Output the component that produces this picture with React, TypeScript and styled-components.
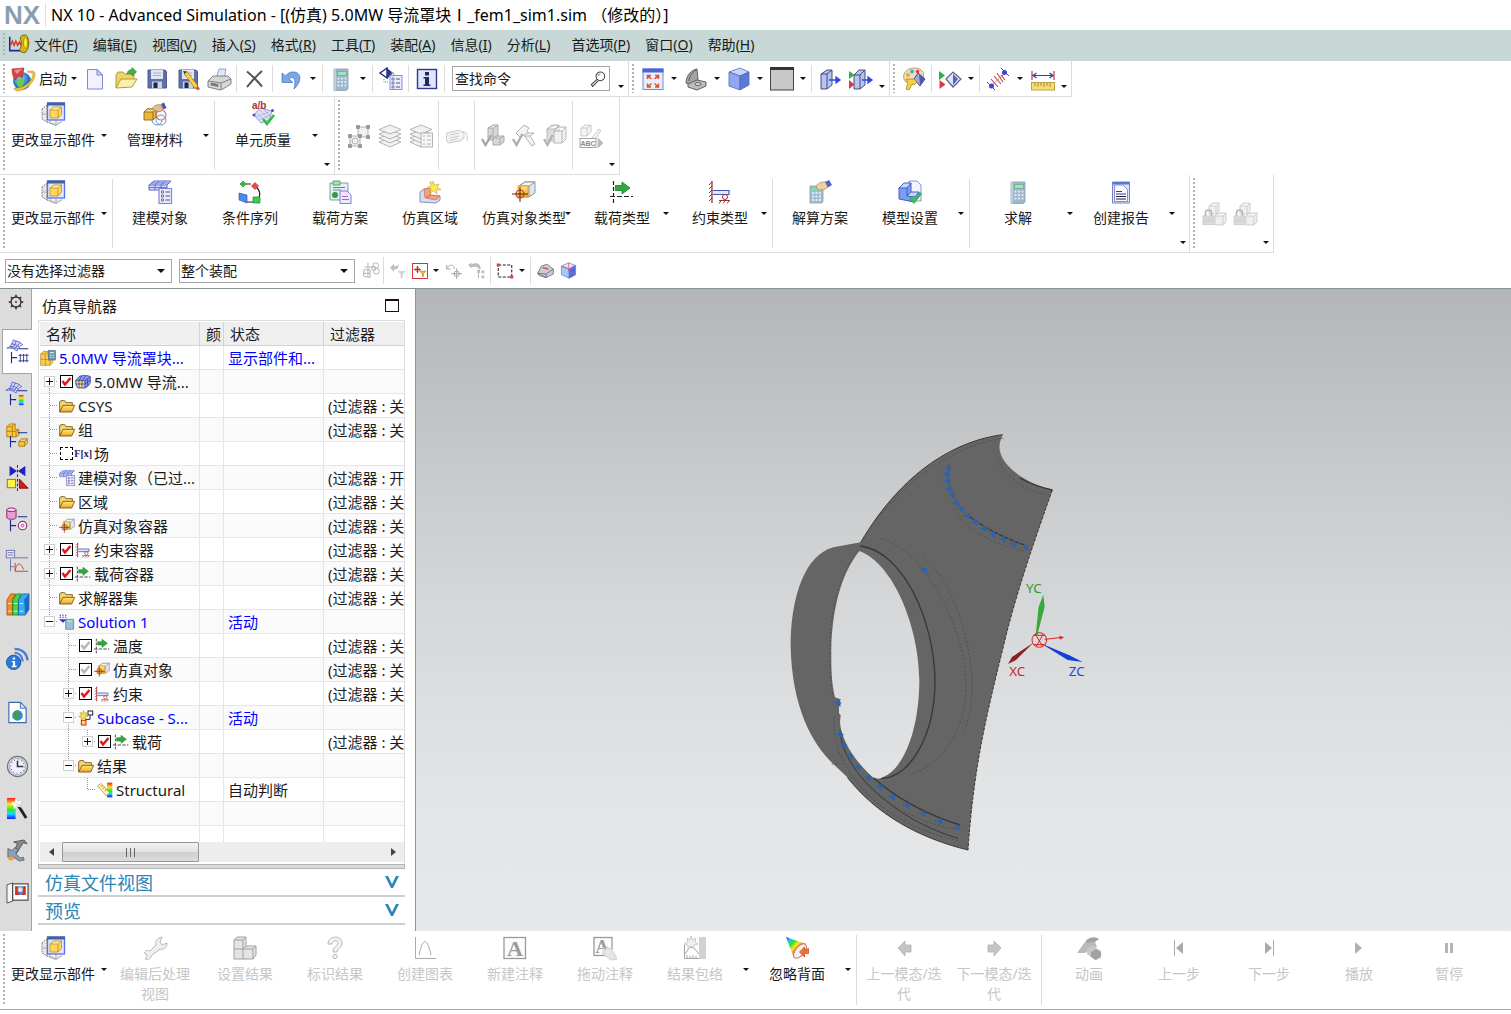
import React, { ReactNode, useState } from "react";
import styled, { createGlobalStyle, css } from "styled-components";

/* ---------- theme values ---------- */

const FONT = `"Noto Sans", "Noto Sans CJK SC", sans-serif`;
const LINE = "#dcdcdc";
const BLUE = "#0000ff";

const GlobalStyle = createGlobalStyle`
  *, *::before, *::after { box-sizing: border-box; }
  body { margin: 0; background: #fff; }
  button, input, select { font: inherit; color: inherit; margin: 0; }
  button { background: none; border: 0; padding: 0; cursor: pointer; }
  button:disabled { cursor: default; }
`;

/* ---------- icon drawings, all on a 24 x 24 grid ---------- */

const Folder = (
  <g stroke="#7a5200" strokeLinejoin="round" strokeWidth="1.300">
    <path d="M1 21V6l1.500-2h6l2 3h9.500v4" fill="#f6d878" />
    <path d="M1 21 6 11h17.500L19 21z" fill="url(#gold)" />
  </g>
);

const PartWindow = (
  <g>
    <path d="M1 7 6 3v17l-5-3zM6 20l9 3.500 6-4" fill="#e6e9ec" stroke="#777" strokeDasharray="1.500 1" />
    <path d="M1 12h8v9M9 21l6 2V17" fill="none" stroke="#aaa" />
    <rect x="6.500" y="1" width="17" height="17" fill="#dfe6fa" stroke="#5a6ef0" strokeWidth="1.300" />
    <rect x="6" y="0.500" width="18" height="3" fill="#43609a" />
    <path d="m9 8 4-3h7.500v7l-3.500 4H9z" fill="#ffd75a" />
    <path d="m9 8 4-3h7.500L17 8.500z" fill="#fff0a8" />
    <path d="m9 8 4-3h7.500v7L17 16H9zM9 8h8l3.500-3M17 8v8" fill="none" stroke="#c08a20" strokeWidth=".8" />
  </g>
);

const BoxTarget = (
  <g>
    <path d="m7 6 6-4h10v11l-6 4H7z" fill="#dfe5ec" stroke="#8d96a2" />
    <path d="m7 6 6-4h10l-6 4z" fill="#f4f6f9" stroke="#8d96a2" />
    <path d="M17 6v11" stroke="#8d96a2" />
    <path d="M6 6h10v11H6z" fill="url(#gold)" stroke="#e8982a" />
    <circle cx="8" cy="14" r="4" fill="none" stroke="#d03a20" strokeWidth="1.200" />
    <path d="M8 7v15M0 14h16" stroke="#4a2a1a" strokeWidth="1" />
  </g>
);

const LoadArrow = (
  <g>
    <path d="M3.500 1v22" stroke="#222" strokeDasharray="4 2" strokeWidth="1.200" />
    <path d="M0 16.500h23" stroke="#222" strokeDasharray="5 2" strokeWidth="1.200" />
    <path d="M5.500 5.500H12V2l8 6-8 6v-3.500H5.500z" fill="#2fa83c" stroke="#1a7a28" strokeWidth=".8" />
  </g>
);

const Fixed = (
  <g stroke="#a03030" fill="none">
    <path d="M4 1v22" strokeWidth="1.300" />
    <path d="m4 2-3 3M4 6 1 9M4 10l-3 3M4 14l-3 3M4 18l-3 3" />
    <path d="M5 10.500h16v4H5" stroke="#4a55b8" fill="#e3e6ff" strokeWidth="1.200" />
    <circle cx="17" cy="17" r="2.500" />
    <path d="M11 20.500h11M13 21l-2 2.500M17 21l-2 2.500M21 21l-2 2.500" />
  </g>
);

const MeshList = (
  <g>
    <path d="m1 5 5-4h17l-4 4v5H1z" fill="#d5defb" stroke="#5a66d8" />
    <path d="M1 5h18l4-4M7 5v5M13 5v5M7 5l4-4M13 5l4-4M1 7.500h18M3.500 3H21" fill="none" stroke="#5a66d8" strokeWidth=".9" />
    <rect x="11" y="8.500" width="12.500" height="15" fill="#e8ecff" stroke="#8288e6" strokeWidth="1.200" />
    <path d="M13.500 11h2v2h-2zM13.500 15h2v2h-2zM13.500 19h2v2h-2z" fill="#fff" stroke="#667" strokeWidth=".9" />
    <path d="M17.500 12H22M17.500 16H22M17.500 20H22" stroke="#556" />
  </g>
);

const Calculator = (
  <g>
    <path d="M5 2h14v20l-2 1.500H5z" fill="#9db7cc" stroke="#86a0b6" strokeWidth=".8" />
    <path d="M5 2h2v21.500H5z" fill="#bccddc" />
    <rect x="8.500" y="4.500" width="9" height="4" fill="#9ce8b0" stroke="#6fa38a" strokeWidth=".7" />
    <path d="M8.500 11.500h9M8.500 15h9M8.500 18.500h9" stroke="#dbe8f6" strokeWidth="2" strokeDasharray="2 1.500" />
  </g>
);

const Tick = <path d="m12 17 4 5 7-9" fill="none" stroke="#2fc040" strokeWidth="2.600" />;

const Floppy = (
  <g>
    <path d="M3 3h17l1.500 1.500V21H3z" fill="#6070ac" stroke="#4a5a94" />
    <rect x="6" y="3" width="12" height="9" fill="#e2e6f4" />
    <path d="M8 6h8M8 8.500h8" stroke="#a9b1cc" />
    <rect x="7" y="14.500" width="10" height="7" fill="#cdd3e0" />
    <rect x="8.500" y="15.500" width="4" height="5.500" fill="#1c2848" />
  </g>
);

const SheetNet = (
  <g fill="#d6defc" stroke="#4a58c0" strokeWidth=".9">
    <path d="M0 10C4 9 6 5 7 1c4 2 6 1 10 5-3 1-5 4-6 7-3-3-7-4-11-3z" />
    <path d="M3 8c4 0 7 1 9 3M5 5c4 1 7 2 9 4M10 2C9 6 7 9 4 10M14 4c-2 2-4 5-6 7" fill="none" />
  </g>
);

const TreeStem = (
  <path d="M13 10.500h10M5 14v12M5 20h6" stroke="#1a2a8c" strokeWidth="1.200" fill="none" />
);

const Locked = (
  <g fill="#efefef" stroke="#cacaca" strokeWidth=".9">
    <path d="m7 4 3-3h7v8l-3 3H7zM7 4h7l3-3M14 4v8" />
    <path d="m13 14 3-3h8v9l-3 3h-8zM13 14h8l3-3M21 14v9" />
    <rect x="1" y="14" width="11" height="8.500" fill="#dcdcdc" />
    <path d="M3.500 14v-3c0-4 6-4 6 0v3" fill="none" stroke="#b4b4b4" strokeWidth="1.600" />
    <path d="M2 17h9M2 19.500h9" />
  </g>
);

const Stack = (
  <g fill="#f2f2f2" stroke="#ababab" strokeWidth=".9">
    <path d="m1 18 11-4 11 4-11 5z" /><path d="m1 14 11-4 11 4-11 5z" />
    <path d="m1 10 11-4 11 4-11 5z" /><path d="m1 5.500 11-4.500 11 4.500L12 10z" />
  </g>
);

const ICONS: Record<string, ReactNode> = {
  folder: Folder,
  partWindow: PartWindow,
  boxTarget: BoxTarget,
  loadArrow: LoadArrow,
  fixed: Fixed,
  meshList: MeshList,
  calculator: Calculator,
  floppy: Floppy,
  locked: Locked,
  layers: Stack,
  app: (
    <g>
      <path d="M2 3v16h13" fill="none" stroke="#1b2a9a" strokeWidth="1.800" />
      <path d="m3 13 2-5 2 5 2-5 2 5 2-4 2 4" fill="none" stroke="#d83020" strokeWidth="1.500" />
      <path d="M14 5c0-3 3-4 6-4 5 3 5 15 0 20-4 1-6-1-7-3 3-4 3-8 1-13z" fill="#d8b414" stroke="#6e5a00" />
      <ellipse cx="20" cy="10" rx="2.200" ry="6" fill="#fff03a" stroke="#8a7400" strokeWidth=".8" />
    </g>
  ),
  start: (
    <g>
      <circle cx="11" cy="14" r="9" fill="url(#sea)" />
      <path d="M7 12c3-2 6 0 6 3s-3 6-5 5-4-6-1-8z" fill="#6cc850" />
      <path d="M3 21c9 1 18-6 19-13 0-2-3-3-6-3 5-2 8-1 8 2 0 8-9 16-17 17-2 0-4-1-4-3z" fill="#f5c040" stroke="#c08a18" strokeWidth=".6" />
      <path d="M1 2 13 1l-2 10-3-2-4 4C2 10 1 6 1 2z" fill="#d84444" stroke="#a02828" strokeWidth=".6" />
      <path d="m3 3 8-1-5 5z" fill="#f09090" />
    </g>
  ),
  newDoc: (
    <g stroke="#8288cc">
      <path d="M4.500 2.500H14l5.500 5.500v14h-15z" fill="#f0f3ff" />
      <path d="M14 2.500V8h5.500z" fill="#cdd3f2" />
    </g>
  ),
  open: (
    <g strokeWidth=".9">
      <path d="M2 21V8l2-3h5l2 2h9v5" fill="#ecd468" stroke="#a8922c" />
      <path d="m2 21 5-9h16l-5 8z" fill="#faf0a8" stroke="#a8922c" />
      <path d="M13 7c1-4 3-4.500 5-4V.5l4.500 4.500L18 9V6.500c-2 0-3.500 0-5 .5z" fill="#48b048" stroke="#2a8030" strokeWidth=".7" />
    </g>
  ),
  saveEdit: (
    <g>
      {Floppy}
      <path d="m8 6 3-1.500L22 19l-3 2.500z" fill="#ffd23a" stroke="#9a7a10" strokeWidth=".7" />
      <path d="m19.500 21 2.500-2 2 3-2.500 1.500z" fill="#d05a5a" />
      <path d="m7 4 4 .5L8.500 7z" fill="#333" />
    </g>
  ),
  print: (
    <g stroke="#777" strokeWidth=".9">
      <path d="m9 12 3-10h7l-2 10z" fill="#dfe8fb" stroke="#8a97bb" />
      <path d="M1 14 6 9h15l3 3v5l-8 5-3 1-12-3z" fill="#d4d6d9" />
      <path d="m1 14 13 2 10-4M14 16v6" fill="none" />
      <path d="m4 16 7 1.500v2L4 18z" fill="#77797d" />
    </g>
  ),
  cross: <path d="M4 4.500c5 4 10 9 15 15M19 4C13 9 9 14 4 20" fill="none" stroke="#555" strokeWidth="2" />,
  undo: (
    <path d="M3 6v9.500h11l-4-3.500c3-3 8-2 5 10 8-7 8-17-1-17-3 0-5 1-7.500 4z" fill="#7aa8e4" stroke="#4a78c0" strokeWidth=".8" />
  ),
  switchCmd: (
    <g>
      <path d="m1 6 7-5v10z" fill="#fff" stroke="#1b2484" strokeWidth="1.400" />
      <path d="m8 1 6 5-6 6z" fill="#2a3590" />
      <path d="M5 12v3h4M12 6h3v3" fill="none" stroke="#888" strokeDasharray="1 1" />
      <rect x="11" y="8.500" width="12" height="14" fill="#e8ecff" stroke="#8a90e0" />
      <path d="M13 11h2v2h-2zM13 15h2v2h-2zM13 19h2v2h-2z" fill="none" stroke="#667" strokeWidth=".8" />
      <path d="M17 12h4M17 16h4M17 20h4" stroke="#556" />
    </g>
  ),
  info: (
    <g>
      <rect x="2.500" y="2.500" width="19" height="19" fill="#dfe5ff" stroke="#33388c" strokeWidth="1.400" />
      <path d="M10 5h4v3.500h-4zM8.500 10H14v7.500h1.500V19h-7v-1.500H10V11.500H8.500z" fill="#252a55" />
    </g>
  ),
  search: (
    <g fill="none" stroke="#444">
      <circle cx="15.500" cy="8" r="6.500" strokeWidth="1.600" />
      <path d="M12 8a3.500 3.500 0 0 1 3.500-3.500" />
      <path d="m10.500 12.500-8.500 8 2 2.500 8.500-8.500" strokeWidth="1.600" />
    </g>
  ),
  fit: (
    <g>
      <rect x="2" y="2" width="20" height="20.500" fill="#e9eeff" stroke="#6b7ad0" strokeWidth=".9" />
      <rect x="1.500" y="1.500" width="21" height="4" fill="#4a66d8" />
      <g stroke="#e0502a" strokeWidth="1.500" fill="none">
        <path d="m7 9 3.500 3M6.500 12V8.500H10M17 9l-3.500 3M14 8.500h3.500V12M7 19.500l3.500-3M6.500 16.500V20H10M17 19.500l-3.500-3M14 20h3.500v-3.500" />
      </g>
    </g>
  ),
  orient: (
    <g stroke="#555" strokeWidth=".9">
      <path d="M2 16C2 9 7 3 13 2l1 11-8 5z" fill="#a4a4a4" />
      <path d="M5 14c0-5 4-9 8-12" fill="none" />
      <path d="m4 17 9-4 9 2v4l-9 4-9-3z" fill="#bcbcbc" />
      <ellipse cx="14" cy="17" rx="3" ry="1.500" fill="#ddd" />
    </g>
  ),
  cube: (
    <g stroke="#5068c0" strokeWidth=".8">
      <path d="M2 5 13 1l9 4-9 4z" fill="#c8d6fb" />
      <path d="m2 5 11 4v14L2 19z" fill="#8fa8f0" />
      <path d="m22 5-9 4v14l9-5z" fill="#5c78d4" />
    </g>
  ),
  background: (
    <g>
      <rect x="0.500" y="1" width="23" height="22" fill="#c8c8c8" stroke="#444" />
      <rect x="0" y="0" width="24" height="3" fill="#333" />
    </g>
  ),
  section: (
    <g>
      <path d="m3 7 6-4h5v15l-5 4H3z" fill="#b6c4f4" stroke="#3b3f66" strokeWidth=".9" />
      <path d="M3 7h6l5-4M9 7v15" fill="none" stroke="#3b3f66" strokeWidth=".9" />
      <path d="M11 13h9M18 10l4 3-4 3z" fill="#3048e0" stroke="#3048e0" strokeWidth="1.300" />
    </g>
  ),
  sectionEdit: (
    <g>
      <path d="m5 8 5-5h6v15l-5 4H5z" fill="#b6c4f4" stroke="#3b3f66" strokeWidth=".9" />
      <path d="M5 8h6l5-5M11 8v14" fill="none" stroke="#3b3f66" strokeWidth=".9" />
      <path d="m0 4 5.500 4L0 12z" fill="#2fae4a" />
      <path d="m0 13 5.500 4.500L0 22z" fill="#d83a4a" />
      <path d="M13 13h8M19 10l4 3-4 3z" fill="#3048e0" stroke="#3048e0" strokeWidth="1.300" />
    </g>
  ),
  palette: (
    <g>
      <path d="M3 14C-1 8 4 1 12 1s11 5 9 9-6 1-9 3-6 4-9 1z" fill="#f0dfb8" stroke="#a08c60" strokeWidth=".8" />
      <circle cx="6" cy="8" r="2" fill="#f0b020" />
      <circle cx="10" cy="4.500" r="2" fill="#38b0e0" />
      <circle cx="15.500" cy="4.500" r="1.800" fill="#d84848" />
      <path d="m12 12 4-6 7 6-5 7z" fill="#a0aae0" stroke="#333c80" strokeWidth=".9" />
      <path d="m17 7 6 5-5 6z" fill="#4a58b0" />
      <path d="M4 12h8l3 3-3 3-2-1-3 6-3-1 2-6z" fill="#f3d24a" stroke="#a38718" strokeWidth=".8" />
    </g>
  ),
  playDiamond: (
    <g>
      <path d="m1 4 6 4.500L1 13z" fill="#2fae4a" />
      <path d="m1.500 13 6 4.500-6 4.500z" fill="#d83a4a" />
      <path d="m8 12 7-7 8 7-8 8z" fill="#dfe4f8" stroke="#5a6290" strokeWidth="1.200" />
      <path d="m15 7 5 5-5 6z" fill="#5362c0" />
    </g>
  ),
  measure: (
    <g>
      <path d="m5 19 14-13" stroke="#888" strokeDasharray="2 1" />
      <path d="m5 12 7 8M8 9l7 8M11 6l6 9M15 8l4 5" stroke="#c84040" strokeWidth="1.100" />
      <path d="m15 1 8 8M1 15l8 8" stroke="#444" strokeWidth=".9" />
      <circle cx="18.500" cy="5.500" r="2.500" fill="#3a44d8" />
      <circle cx="5.500" cy="19" r="2.500" fill="#3a44d8" />
    </g>
  ),
  ruler: (
    <g>
      <path d="M1 4v9M23 4v9" stroke="#d03030" strokeWidth="1.200" />
      <path d="M2 8.500h20M5.500 6 2 8.500 5.500 11M18.500 6 22 8.500 18.500 11" stroke="#2a3ab8" fill="none" strokeWidth="1.200" />
      <rect x="0.500" y="15.500" width="23" height="7.500" fill="#f8de70" stroke="#b59a38" strokeWidth=".9" />
      <path d="M4 16v3M7 16v4M10 16v3M13 16v4M16 16v3M19 16v4" stroke="#96802c" strokeWidth=".9" />
    </g>
  ),
  material: (
    <g>
      <circle cx="14" cy="18" r="5" fill="none" stroke="#6878c0" strokeWidth=".9" />
      <circle cx="18" cy="13" r="5" fill="#f6f8ff" stroke="#e07878" strokeWidth="1.200" />
      <circle cx="18" cy="18" r="5" fill="none" stroke="#5a8ad0" strokeWidth=".9" />
      <path d="m1 10 3-3h9v8l-3 3H1z" fill="#e8b83a" stroke="#8a6618" strokeWidth=".9" />
      <path d="m1 10 3-3h9l-3 3z" fill="#fbe08a" stroke="#8a6618" strokeWidth=".9" />
      <path d="M10 10v8" stroke="#8a6618" strokeWidth=".9" />
      <path d="M9 7c2-4 6-5 9-4l2 5c-3 2-5 2-7 1z" fill="#dcc090" stroke="#a68454" strokeWidth=".8" />
      <path d="m18 2 3-1.500 2.500 5.500-3 1.500z" fill="#4a4fc0" />
    </g>
  ),
  quality: (
    <g>
      <path d="M3 13 9 6l12 3-3 9-8 3z" fill="#dde2f6" stroke="#8890cc" strokeWidth=".9" />
      <path d="m6 11 8 8M9 8l8 9M13 8l6 6M5 15l13-5M8 18l11-5" stroke="#a8aedc" strokeWidth=".8" />
      <circle cx="3" cy="13" r="1.500" fill="#4450c0" />
      <circle cx="21.500" cy="8.500" r="1.500" fill="#4450c0" />
      <text x="1" y="7" fontSize="10" fontWeight="700" fill="#b03030" fontFamily="Liberation Sans, sans-serif">a/b</text>
      {Tick}
    </g>
  ),
  sequence: (
    <g fill="none" stroke="#222">
      <path d="M8 4h5M18 7c4 3 4 8 3 11M15 22H9" strokeWidth="1.200" />
      <path d="m5 1 3 3-3 3-3-3z" fill="#2fbf3c" stroke="#1a8a28" strokeWidth=".7" />
      <path d="M17 2.500 20.500 6 17 9.500 13.500 6z" fill="#f04848" stroke="#c03030" strokeWidth=".7" />
      <path d="m1 13 8 2v8l-8-3z" fill="#4a8ae8" stroke="#2a5ab8" strokeWidth=".7" />
      <path d="M15 17h7v6h-7z" fill="#3ad048" stroke="#1a8a28" strokeWidth=".7" />
    </g>
  ),
  scheme: (
    <g>
      <path d="M2 3h18v17H2z" fill="#e6ecfa" stroke="#6a9a8a" strokeWidth=".9" />
      <path d="M5 1h7v4H5z" fill="#a8e4b0" stroke="#3a9a4a" strokeWidth=".8" />
      <path d="M5 7.500h12M5 10h8" stroke="#4aa05a" />
      <circle cx="7" cy="15" r="3" fill="#2fa03a" />
      <path d="M12 11h7l4 4v8.500H12z" fill="#eceaff" stroke="#7a72c8" strokeWidth=".9" />
      <path d="M14 16.500h6M14 19.500h7" stroke="#c05ab0" />
    </g>
  ),
  region: (
    <g>
      <path d="m2 12 4-3h6v6l10 1v4l-4 3-16-1z" fill="#d8dcf0" stroke="#7c85b4" strokeWidth=".9" />
      <path d="m6 9 6-1v8l-5 2zM8 18l4-3 10 1-4 4z" fill="#f5a080" stroke="#d07850" strokeWidth=".8" />
      <path d="m15 1 1.500 4L21 4l-2 3.500 4 2-4.500.5.500 4-3.500-3-3 2 .5-4.500-4-1 4-2-1-4 2.500 2z" fill="#f8e85a" stroke="#c4a828" strokeWidth=".6" />
    </g>
  ),
  solveHand: (
    <g>
      <path d="M2 6h13v15l-1 2H2z" fill="#a3bcd0" stroke="#86a0b6" strokeWidth=".8" />
      <path d="M4 13h9M4 16.500h9M4 20h9" stroke="#dfeaf4" strokeWidth="2" strokeDasharray="2 1.500" />
      <path d="M4 9.500h7" stroke="#7ee09a" strokeWidth="2.500" />
      <path d="M8 6c3-4 7-4 10-4l2 5c-3 3-6 3-10 3z" fill="#ecd0a0" stroke="#b08c58" strokeWidth=".8" />
      <path d="m17 2 4-2 3 5-4 2.500z" fill="#5a5fd0" />
    </g>
  ),
  modelSet: (
    <g>
      <path d="M11 1h8l4 4v16H11z" fill="#f2f4ff" stroke="#7a88d0" strokeWidth=".9" />
      <path d="m1 8 5-5h7v9h8v5l-5 5-15-3z" fill="#7d9ef0" />
      <path d="m1 8 5-5h7l-4 5zM9 16l4-4h8l-4 5z" fill="#c6d6fb" />
      <path d="m1 8 5-5h7v9h8v5l-5 5-15-3zM1 8h8l4-5M9 8v8l4-4M9 16l8 1 4-5" fill="none" stroke="#3454b8" strokeWidth=".9" />
      {Tick}
    </g>
  ),
  report: (
    <g>
      <path d="M3.500 2h17v21h-17z" fill="#dfe4ff" stroke="#6a76c0" strokeWidth=".9" />
      <path d="M3.500 2h17v2.500h-17z" fill="#5a7ad0" />
      <path d="M5.500 5H14l4.500 4.500V21.500h-13z" fill="#fbfbff" stroke="#7a84c8" strokeWidth=".9" />
      <path d="M7 11.500h6M7 14h10" stroke="#2a35c0" strokeWidth="1.200" />
      <path d="M7 16.500h10M7 19h10" stroke="#222" />
    </g>
  ),
  layout: (
    <g fill="#f0f0f0" stroke="#b0b0b0">
      <rect x="11" y="3" width="10" height="10" />
      <rect x="3" y="12" width="10" height="10" />
      <circle cx="8" cy="17" r="3" fill="none" />
      <path d="M9.500 1.500h3v3h-3zM19.500 1.500h3v3h-3zM19.500 11.500h3v3h-3zM1.500 10.500h3v3h-3zM11.500 10.500h3v3h-3zM1.500 20.500h3v3h-3zM11.500 20.500h3v3h-3z" fill="#999" stroke="#999" />
    </g>
  ),
  layersList: (
    <g>
      {Stack}
      <g fill="#f6f6f6" stroke="#ababab" strokeWidth=".9">
        <rect x="12" y="9" width="11.500" height="14" />
        <path d="M14 12h2M18 12h4M14 16h2M18 16h4M14 20h2M18 20h4" />
      </g>
    </g>
  ),
  tag: (
    <g fill="#f3f3f3" stroke="#cacaca">
      <path d="m2 9 12-3 5 3v5l-4 3-12 2c-2-3-2-7-1-10z" />
      <path d="m5 11 9-2M5 14l9-2M5 16.500l8-2M17 8c5-1 6 3 5 9" fill="none" />
    </g>
  ),
  checkPart: (
    <g fill="#d8d8d8" stroke="#a4a4a4" strokeWidth=".9">
      <path d="m7 4 5-3h5v11l-5 4H7zM7 4h5l5-3M12 4v12" />
      <path d="m12 14 3-2h8v6l-4 3h-7zM12 14h7l4-2M19 14v7" />
      <path d="m1 15 3.500 6 6-10" fill="none" strokeWidth="2.200" />
    </g>
  ),
  checkHammer: (
    <g fill="#f4f4f4" stroke="#aaa" strokeWidth=".9">
      <path d="m4 9 8-8 5 3-2 3 8 13-3 2-9-12-3 3z" />
      <path d="m12 12 3-3 7 0-4 3z" />
      <path d="m1 15 3.500 6 6-11" fill="none" strokeWidth="2.200" />
    </g>
  ),
  checkBox: (
    <g fill="#dedede" stroke="#b0b0b0" strokeWidth=".9">
      <path d="m4 5 5-4h7v12l-4 4H4zM4 5h8l4-4" />
      <path d="m11 7 4-4h8v12l-4 4h-8zM11 7h8l4-4M19 7v12" fill="#f0f0f0" />
      <path d="m1 15 3.500 6 5-10" fill="none" strokeWidth="2.200" />
    </g>
  ),
  abc: (
    <g fill="#f4f4f4" stroke="#c4c4c4" strokeWidth=".9">
      <path d="m2 4 4-3h6v7l-4 4H2zM2 4h6l4-3M8 4v8" />
      <path d="m13 14 7-9 2 1.500L16 15z" />
      <rect x="1" y="14.500" width="16" height="9" fill="#fff" stroke="#999" />
      <text x="1.500" y="22" fontSize="7" fontWeight="700" stroke="none" fill="#888" fontFamily="Liberation Sans, sans-serif">ABC</text>
      <path d="m19 14 5 5-5 5z" fill="#b8b8b8" />
    </g>
  ),
  linkGray: (
    <g fill="none" stroke="#b4b4b4" strokeWidth="1.400">
      <path d="M1 11h9v11l-9-2zM1 16h9M7 1v20M2 7h12" />
      <circle cx="18" cy="5" r="4" /><circle cx="19" cy="13" r="4" /><circle cx="15" cy="9" r="3" />
    </g>
  ),
  filterBack: (
    <g fill="#c0c0c0">
      <path d="m0 7 6-6v4c5 0 5-1 7-3 0 6-3 8-7 8v3z" /><path d="M11 12h13l-5 5v6h-3v-6z" fill="#d4d4d4" />
    </g>
  ),
  filterSnap: (
    <g>
      <path d="M7 2v14M0 9h14" stroke="#333" strokeWidth="1.600" />
      <circle cx="7" cy="9" r="4" fill="none" stroke="#d03030" strokeWidth="1.500" />
      <path d="M11 12h13l-5 5v6h-3v-6z" fill="#f5b52a" stroke="#b07c10" />
    </g>
  ),
  rotateGray: (
    <g fill="none" stroke="#a8a8a8" strokeWidth="1.500">
      <path d="M1 9V3M1 9h6M2 8c3-7 10-6 11 1" /><circle cx="16" cy="16" r="4" /><path d="M16 8v16M8 16h16" />
    </g>
  ),
  treeGray: (
    <g fill="#bcbcbc">
      <path d="m0 4 5-3v2c8-3 13 0 13 7h-3c0-3-4-4-10-3v2z" />
      <path d="M13 11h4v4h-4zM19 12h4v4h-4zM19 19h4v4h-4zM14 14h1.500v9H14z" />
    </g>
  ),
  marquee: (
    <g>
      <path d="M3 4h18v16H3z" fill="none" stroke="#222" strokeWidth="1.400" strokeDasharray="4 2" />
      <path d="M1 2h4v4H1zM19 18h4v4h-4z" fill="#e03a3a" />
    </g>
  ),
  shellPick: (
    <g stroke="#50566a">
      <path d="M1 16 6 6l8-3 9 7v7l-10 5z" fill="#c9cdd6" />
      <path d="m1 16 12 1 10-7M13 17v5M1 16l2 3 10 3" fill="none" />
      <path d="m8 8 8 2" stroke="#d84040" strokeWidth="2" />
    </g>
  ),
  cubePick: (
    <g stroke="#5a72c0" strokeWidth=".9">
      <path d="M2 6 12 1l10 4-9 5z" fill="#d8e2fb" />
      <path d="M2 6l11 4v13L2 18z" fill="#a4c6fa" />
      <path d="m22 5-9 5v13l9-5z" fill="#4a6ee8" />
      <path d="M12 1v12l10 5M2 6l11 4 9-5" stroke="#e05a70" fill="none" />
    </g>
  ),
  wrench: (
    <path d="M13 9c-1-4 1-7 6-8l-2 5 2 3 5-2c0 5-4 7-7 6L8 20c0 3-3 4-6 3l2-3-1-2-2-1c2-3 4-3 6-2z" fill="#efefef" stroke="#bababa" />
  ),
  blocks: (
    <g fill="#e4e4e4" stroke="#a0a0a0">
      <path d="m1 4 3-3h9v9h10v9l-3 4H1z" />
      <path d="M1 4h9l3-3M10 4v19M1 13h19l3-3M20 13v10M10 13l3-3" fill="none" />
    </g>
  ),
  question: (
    <g fill="#f2f2f2" stroke="#b8b8b8">
      <path d="M5 8c0-9 14-9 14-1 0 5-5 5-5 9h-4c0-6 5-6 5-9 0-3-6-3-6 1z" />
      <circle cx="12" cy="20.500" r="2.200" />
    </g>
  ),
  chart: (
    <g fill="none" stroke="#aaa">
      <path d="M2.500 1v21.500H23M6 19C10 1 14 1 18 19" />
    </g>
  ),
  noteA: (
    <g>
      <rect x="1" y="1.500" width="21.500" height="21" fill="#fcfcfc" stroke="#9a9a9a" strokeWidth="1.300" />
      <text x="12" y="19.500" textAnchor="middle" fontSize="22" fontWeight="700" fill="#9a9a9a" fontFamily="Liberation Serif, serif">A</text>
    </g>
  ),
  noteDrag: (
    <g>
      <rect x="1" y="1.500" width="18" height="18" fill="#fcfcfc" stroke="#9a9a9a" strokeWidth="1.300" />
      <text x="9" y="16.500" textAnchor="middle" fontSize="18" fontWeight="700" fill="#9a9a9a" fontFamily="Liberation Serif, serif">A</text>
      <path d="m10 12 3 2 1-4 2 3 2-1 3 5 3 6-6 1-8-6z" fill="#e6e6e6" stroke="#d0d0d0" />
    </g>
  ),
  envelope: (
    <g>
      <rect x="16" y="1" width="7" height="22" fill="#d2d2d2" />
      <path d="M1.500 9v13.500H16M2 18l5-7 4 1 5 6M4 22v-3M7 22v-2M10 22v-3M13 22v-2" fill="none" stroke="#a2a2a2" />
      <path d="m8 0 1.500 4L13 2l-1 4 3 2-4 1v3L8 10l-3 3V9L1 8l4-2-1-4 3 2z" fill="#efefef" stroke="#cacaca" />
    </g>
  ),
  cone: (
    <g>
      <path d="M1 1 21 8 9 22z" fill="url(#rainbowCone)" />
      <ellipse cx="15" cy="15" rx="4.500" ry="8.500" transform="rotate(40 15 15)" fill="#f2f2f2" stroke="#d0705a" />
      <path d="M23.500 12.500v5h-4v3.500l-5-5 5-5v3z" fill="#f07038" stroke="#c04818" strokeWidth=".7" />
    </g>
  ),
  arrowL: <path d="m6 12 7-7v4h6v7h-6v4z" fill="#c4c4c4" stroke="#b0b0b0" strokeWidth=".8" />,
  arrowR: <path d="m19 12-7-7v4H6v7h6v4z" fill="#c4c4c4" stroke="#b0b0b0" strokeWidth=".8" />,
  animate: (
    <g>
      <path d="M8 6C11 1 18 0 22 3l-4 3 2 5-8 3-4 3-8 0z" fill="#bababa" />
      <path d="M9 5c3-4 9-4 13-2l-5 3-7 1z" fill="#a2a2a2" />
      <path d="m10 12 6-2 8 5v6l-6 3-8-6z" fill="#c8c8c8" />
      <path d="m14 16 5-3 5 3v5l-5 3-5-3z" fill="#a2a2a2" />
    </g>
  ),
  stepB: <path d="M7 4h1v16H7zM16 6v12l-7-6z" fill="#aaa" />,
  stepF: <path d="M16 4h1v16h-1zM8 6v12l7-6z" fill="#aaa" />,
  play: <path d="M8 6v12l7-6z" fill="#b0b0b0" />,
  pause: <path d="M8 7h3v10H8zM13 7h3v10h-3z" fill="#b4b4b4" />,
  gear: (
    <g fill="none" stroke="#333">
      <circle cx="12" cy="12" r="7.500" strokeWidth="2" />
      <path d="M12 1v4M12 19v4M1 12h4M19 12h4M4.500 4.500 7 7M17 17l2.500 2.500M4.500 19.500 7 17M17 7l2.500-2.500" strokeWidth="2.600" />
      <circle cx="12" cy="12" r="1" fill="#333" />
    </g>
  ),
  navMesh: (
    <g>
      {SheetNet}
      {TreeStem}
      <path d="M14.500 16v9M18 16v9M21.500 16v9M12.500 17.500h11M12.500 23.500h11" stroke="#1a2a8c" fill="none" strokeWidth=".9" />
    </g>
  ),
  navResult: (
    <g>
      {SheetNet}
      {TreeStem}
      <rect x="14" y="15" width="5" height="11" fill="url(#rainbow)" />
    </g>
  ),
  navAssembly: (
    <g strokeWidth=".9">
      <path d="m1 4 3-3h6v6h4v6l-3 2H1z" fill="#f9c63a" stroke="#a87708" />
      <path d="M1 4h6l3-3M7 4v11M1 9h10l3-2M11 9v6" stroke="#a87708" fill="none" />
      {TreeStem}
      <path d="m14 20 3-3h6v5l-3 3h-6zM14 20h6l3-3M20 20v5" fill="#f9c63a" stroke="#a87708" />
    </g>
  ),
  navConstraint: (
    <g>
      <path d="M4 1l8 5.500L4 12zM21 1l-8 5.500L21 12z" fill="#1a22c8" />
      <path d="M12.500 0v28" stroke="#222" strokeDasharray="3 2" />
      <rect x="1.500" y="15.500" width="9" height="9" fill="#fff04a" stroke="#8a7a00" />
      <path d="M14.500 15v10H24z" fill="#d81a1a" stroke="#801010" />
    </g>
  ),
  navPart: (
    <g>
      <path d="M1 3v8c0 3 10 3 10 0V3z" fill="#e8a0d0" stroke="#8a1a6a" />
      <ellipse cx="6" cy="3" rx="5" ry="2" fill="#f7d0ea" stroke="#8a1a6a" />
      {TreeStem}
      <circle cx="18" cy="20" r="4.500" fill="#fff" stroke="#a02a7a" strokeWidth="1.200" />
      <circle cx="18" cy="20" r="1.500" fill="none" stroke="#a02a7a" />
    </g>
  ),
  navGraph: (
    <g fill="none" stroke="#6a70a8">
      <rect x="0.500" y="1.500" width="9" height="8" fill="#e8ebff" />
      <path d="M2 4h6M2 6.500h6M10 9.500h14M5 11v13M5 19h4" />
      <path d="M10 15v9h14M10 23c2-9 6-9 9-1" stroke="#c83a3a" />
    </g>
  ),
  books: (
    <g strokeWidth=".8">
      <path d="m1 7 4-6h5L7 7v16H1z" fill="#f08a2a" stroke="#a0500a" />
      <path d="m7 7 4-6h5l-3 6v16H7z" fill="#4ad04a" stroke="#1a7a1a" />
      <path d="m13 7 4-6h7v16l-4 6h-7z" fill="#3aa8f0" stroke="#0a5aa0" />
      <path d="m19 7 5-6v16l-4 6z" fill="#1a6ac0" />
      <path d="M2 11h4M2 19h4M8 11h4M8 19h4M14 11h4M14 19h4" stroke="#fff" />
    </g>
  ),
  cast: (
    <g>
      <circle cx="8" cy="16" r="7.500" fill="#2a7ad8" stroke="#1a5aa8" />
      <path d="M7 11h2.500v2H7zM6 14.500h3.500v5H11V21H6v-1.500h1.200V16H6z" fill="#fff" />
      <path d="M9 6c5 0 8 4 8.500 9M9 2c8 0 13 5 13.500 12" fill="none" stroke="#4a78cc" strokeWidth="2.200" />
    </g>
  ),
  web: (
    <g>
      <path d="M3 1.500h12l6 6v15H3z" fill="#fff" stroke="#3a6ab0" strokeWidth="1.200" />
      <path d="M15 1.500v6h6z" fill="#dbe6f8" stroke="#3a6ab0" />
      <circle cx="12" cy="15" r="5.500" fill="#3a8ad0" />
      <path d="M8 13c2-4 6-2 6 0s-1 5-3 6-3-3-3-6z" fill="#3ca048" />
    </g>
  ),
  clock: (
    <g>
      <circle cx="12" cy="12" r="10.500" fill="#d8dde4" stroke="#777" strokeWidth="1.300" />
      <circle cx="12" cy="12" r="8.500" fill="#eef3ff" stroke="#9aa4b8" strokeWidth=".8" />
      <circle cx="12" cy="12" r="7" fill="none" stroke="#556" strokeDasharray=".8 2.860" strokeWidth="1.200" />
      <path d="M12 6v6h6" fill="none" stroke="#333" strokeWidth="1.600" />
    </g>
  ),
  wand: (
    <g>
      <rect x="1" y="1" width="9" height="22" fill="url(#rainbow)" />
      <path d="m11 6 10 16" stroke="#222" strokeWidth="3" />
      <path d="m10 1 2 4 4-1-2 4 2 3-5-1-3 3V9L5 6l4-1z" fill="#fff" opacity=".9" />
    </g>
  ),
  tools: (
    <g strokeWidth=".8">
      <path d="m8 3 11-2 3 4-4-1-2 3-5 8-3-2 4-8z" fill="#888" stroke="#444" />
      <path d="m2 10 4 2 3-3 4 2-3 4 5 5 3-1 1 3-5 1-6-4-6 0z" fill="#8f9db8" stroke="#4a5468" />
      <path d="m1 19 6-1 2 3-5 2z" fill="#f0a23a" />
    </g>
  ),
  roles: (
    <g>
      <path d="m1 4 6-2v19l-6 2z" fill="#f4f4f4" stroke="#555" />
      <rect x="7" y="3" width="16" height="17" fill="#fff" stroke="#444" strokeWidth="1.200" />
      <path d="M9.500 5.500h11v9h-11z" fill="#4a8ae8" />
      <path d="M9.500 5.500h2.500v6l3 3H9.500zM18 5.500h2.500v9H16l2-3z" fill="#d83020" />
      <circle cx="15" cy="9" r="2.500" fill="#f8e0b8" />
    </g>
  ),
  rootPart: (
    <g strokeWidth=".9">
      <path d="m1 6 4-4h7v8h7v9l-4 4H1z" fill="#f9cf50" stroke="#a87708" />
      <path d="M1 6h7l4-4M8 6v17M1 14h14l4-4M15 14v9" fill="none" stroke="#a87708" />
      <rect x="13" y="1" width="10" height="14" fill="#6d93b8" stroke="#3f6080" />
      <path d="M15 4h6" stroke="#b8f0c8" strokeWidth="2" />
      <path d="M15 8h6M15 11h6" stroke="#d8e6f2" strokeDasharray="1.500 .7" strokeWidth="1.500" />
    </g>
  ),
  meshBall: (
    <g>
      <path d="M1 10 6 4c5-3 14-2 17 0v9c-2 5-6 7-8 8H5c-3-1-4-6-4-11z" fill="#8f9cf0" />
      <path d="M2 10h12v10H5c-2-1-3-5-3-10z" fill="#f8e860" />
      <path d="M1 10 6 4c5-3 14-2 17 0v9c-2 5-6 7-8 8H5c-3-1-4-6-4-11zM1 10h14l8-6M15 10v11M6 10v10M10.500 10v10M1 15h14l8-6M10 3l-4 7M16 3l-5 7M19 7v11" fill="none" stroke="#2a33a0" strokeWidth="1.100" />
    </g>
  ),
  solution: (
    <g>
      <path d="M1 2h2M5 2h2M9 2h2M1 5h2M5 5h2M9 5h2" stroke="#2a33c0" strokeWidth="1.600" />
      <path d="M0 8h12L6 13z" fill="#2a33c0" />
      <path d="M10 8h12v15H10z" fill="#8fb0c8" stroke="#5a7a98" />
      <path d="M12 11h8" stroke="#a8f0b8" strokeWidth="3" />
      <path d="M12 15h8M12 18h8M12 21h8" stroke="#dbe8f4" strokeDasharray="2 1" />
    </g>
  ),
  subcase: (
    <g>
      <path d="m8 1 1.500 4L13 4l-1.500 3L15 9l-4 1v4l-3-2-3 3V11L1 10l4-2-2-4 4 1z" fill="#f8e04a" stroke="#a88a18" strokeWidth=".8" />
      <rect x="15" y="1.500" width="7" height="6" fill="#fff" stroke="#222" strokeWidth="1.500" />
      <rect x="5" y="15.500" width="7" height="7" fill="#ffe04a" stroke="#c03020" strokeWidth="1.500" />
      <path d="M18 8v6h-7" fill="none" stroke="#222" strokeWidth="1.500" />
    </g>
  ),
  structural: (
    <g>
      <rect x="15" y="1" width="8" height="22" fill="url(#rainbow)" />
      <path d="m1 6 5-4 13 14-5 5z" fill="#fff4b0" stroke="#a88a18" />
      <path d="m6 7 2-2M9 10l2-2M12 13l2-2" stroke="#c03020" strokeWidth="1.500" />
    </g>
  ),
  fx: (
    <text x="-1" y="17" fontSize="15" fontWeight="700" fill="#2a1a6a" fontFamily="Liberation Serif, serif">F[x]</text>
  ),
};

const Svg = styled.svg<{ $s: number }>`
  display: block;
  flex: none;
  width: ${(p) => p.$s}px;
  height: ${(p) => p.$s}px;
  overflow: visible;
`;

const Icon = ({ name, size = 24, tall = false }: { name: string; size?: number; tall?: boolean }) => (
  <Svg $s={size} viewBox={tall ? "0 0 24 28" : "0 0 24 24"} aria-hidden="true">
    {ICONS[name]}
  </Svg>
);

const DefsSvg = styled.svg`
  position: absolute;
  width: 0;
  height: 0;
`;

const Gradients = () => (
  <DefsSvg aria-hidden="true">
    <defs>
      <linearGradient id="gold" x1="0" y1="0" x2="0" y2="1">
        <stop offset="0" stopColor="#ffe88a" />
        <stop offset="1" stopColor="#f0a418" />
      </linearGradient>
      <radialGradient id="sea" cx=".4" cy=".35">
        <stop offset="0" stopColor="#8fdcf8" />
        <stop offset="1" stopColor="#1a70c0" />
      </radialGradient>
      <linearGradient id="rainbow" x1="0" y1="0" x2="0" y2="1">
        <stop offset="0" stopColor="#ff1a1a" />
        <stop offset=".3" stopColor="#ffe81a" />
        <stop offset=".55" stopColor="#2ae82a" />
        <stop offset=".75" stopColor="#1ad8ff" />
        <stop offset="1" stopColor="#1a1aff" />
      </linearGradient>
      <linearGradient id="rainbowCone" x1="0" y1="0" x2="1" y2="1">
        <stop offset="0" stopColor="#2020ff" />
        <stop offset=".15" stopColor="#20c0ff" />
        <stop offset=".3" stopColor="#30e030" />
        <stop offset=".45" stopColor="#f8e820" />
        <stop offset=".65" stopColor="#f04020" />
      </linearGradient>
    </defs>
  </DefsSvg>
);

/* ---------- window frame ---------- */

const Window = styled.div`
  display: flex;
  flex-direction: column;
  min-height: 100vh;
  padding-bottom: 4px;
  font: 14px/20px ${FONT};
  color: #1a1a1a;
  background: #fff;
  overflow: hidden;
`;

const TitleBar = styled.header`
  display: flex;
  align-items: center;
  height: 30px;
  padding-left: 4px;
  color: #000;
`;

const Logo = styled.span`
  width: 42px;
  font: 700 26px/24px "Liberation Sans", sans-serif;
  color: #8a9fae;
  border-right: 1px solid #e0e0e0;
`;

const Title = styled.h1`
  margin: 0;
  padding-left: 5px;
  font-size: 16px;
  font-weight: 400;
  white-space: pre;
`;

const MenuBar = styled.nav`
  display: flex;
  align-items: center;
  height: 31px;
  padding: 0 0 2px 0;
  background: #c8d8d6;
`;

const MenuButton = styled.button<{ $gap?: boolean }>`
  padding: 0 7px 0 8px;
  margin-left: ${(p) => (p.$gap ? 6 : 0)}px;
  white-space: nowrap;
`;

const Grip = styled.span`
  flex: none;
  align-self: stretch;
  width: 8px;
  margin: 3px 0;
  background: repeating-linear-gradient(#b4b4b4 0 2px, transparent 2px 4px) 3px 0 / 2px 100% no-repeat;
`;

const MenuIcon = styled.span`
  margin-right: -3px;
`;

/* ---------- tool bars ---------- */

const Bar = styled.div<{ $h: number }>`
  display: flex;
  height: ${(p) => p.$h}px;
  flex: none;
`;

const Group = styled.div<{ $open?: boolean }>`
  display: flex;
  padding-right: 1px;
  ${(p) =>
    !p.$open &&
    css`
      border-right: 1px solid ${LINE};
      border-bottom: 1px solid ${LINE};
    `}
`;

const Sep = styled.span`
  flex: none;
  align-self: stretch;
  width: 1px;
  margin: 4px 2px;
  background: ${LINE};
`;

const ToolButton = styled.button<{ $w?: number }>`
  display: flex;
  flex: none;
  align-items: center;
  justify-content: center;
  width: ${(p) => p.$w ?? 31}px;
`;

const LaunchButton = styled(ToolButton)`
  gap: 4px;
  justify-content: flex-start;
  padding-left: 3px;
  white-space: nowrap;
`;

const Triangle = styled.span`
  display: block;
  border: 3px solid transparent;
  border-top-color: #111;
  border-bottom: 0;
`;

const DropButton = styled.button<{ $w?: number; $at?: "top" | "low" }>`
  display: flex;
  flex: none;
  justify-content: center;
  align-items: ${(p) => (p.$at === "low" ? "flex-end" : p.$at === "top" ? "flex-start" : "center")};
  padding: ${(p) => (p.$at === "low" ? "0 0 8px" : p.$at === "top" ? "37px 0 0" : "0")};
  width: ${(p) => p.$w ?? 12}px;
`;

const BigButton = styled.button<{ $w?: number; $lead?: number }>`
  display: flex;
  flex: none;
  flex-direction: column;
  align-items: center;
  gap: 4px;
  width: ${(p) => p.$w ?? 90}px;
  padding: 5px 0 0 ${(p) => p.$lead ?? 0}px;
  &:disabled {
    color: #c6c6c6;
  }
`;

const BigLabel = styled.span<{ $wrap?: boolean }>`
  max-width: ${(p) => (p.$wrap ? "80px" : "none")};
  white-space: ${(p) => (p.$wrap ? "normal" : "nowrap")};
  word-break: break-all;
  text-align: center;
`;

const SearchBox = styled.label`
  display: flex;
  align-items: center;
  align-self: center;
  width: 158px;
  height: 25px;
  margin: 0 5px;
  padding: 0 3px 0 2px;
  border: 1px solid #a6a6a6;
`;

const SearchInput = styled.input`
  flex: 1;
  min-width: 0;
  padding: 0;
  border: 0;
  outline: 0;
  background: none;
  &::placeholder {
    color: #1a1a1a;
    opacity: 1;
  }
`;

const Drop = ({ label, w, at }: { label: string; w?: number; at?: "top" | "low" }) => (
  <DropButton type="button" aria-label={label} $w={w} $at={at}>
    <Triangle />
  </DropButton>
);

const Tool = ({ icon, label, w, size, disabled }: { icon: string; label: string; w?: number; size?: number; disabled?: boolean }) => (
  <ToolButton type="button" aria-label={label} $w={w} disabled={disabled}>
    <Icon name={icon} size={size} />
  </ToolButton>
);

type BigProps = { icon: string; text: string; w?: number; lead?: number; disabled?: boolean; wrap?: boolean; drop?: boolean };

const Big = ({ icon, text, w, lead, disabled, wrap, drop }: BigProps) => (
  <>
    <BigButton type="button" $w={w} $lead={lead} disabled={disabled}>
      <Icon name={icon} />
      <BigLabel $wrap={wrap}>{text}</BigLabel>
    </BigButton>
    {drop && <Drop label={`${text} 选项`} at="top" />}
  </>
);

/* ---------- selection bar ---------- */

const SelectionBar = styled.div`
  display: flex;
  flex: none;
  height: 36px;
  padding-left: 5px;
  border-bottom: 1px solid #859492;
`;

const SelectBox = styled.span<{ $w: number }>`
  display: grid;
  align-items: center;
  align-self: center;
  width: ${(p) => p.$w}px;
  height: 24px;
  margin-right: 7px;
  border: 1px solid #a6a6a6;
  & > * {
    grid-area: 1 / 1;
  }
`;

const Select = styled.select`
  appearance: none;
  width: 100%;
  height: 22px;
  padding: 0 20px 0 1px;
  border: 0;
  outline: 0;
  background: none;
`;

const SelectArrow = styled.span`
  justify-self: end;
  margin-right: 6px;
  border: 4px solid transparent;
  border-top-color: #111;
  border-bottom: 0;
  pointer-events: none;
`;

const Framed = styled.span`
  display: block;
  padding: 1px;
  border: 1px solid #d8303c;
`;

/* ---------- main area ---------- */

const Main = styled.main`
  display: flex;
  flex: 1;
  min-height: 0;
`;

const ResourceBar = styled.aside`
  display: flex;
  flex: none;
  flex-direction: column;
  width: 32px;
  background: #dcdcdc;
  border-right: 1px solid #a4a4a4;
`;

const ResourceTab = styled.button<{ $active?: boolean; $gap?: boolean }>`
  display: flex;
  flex: none;
  align-items: center;
  justify-content: center;
  height: 42px;
  padding-left: 3px;
  margin-top: ${(p) => (p.$gap ? 12 : 0)}px;
  ${(p) =>
    p.$active &&
    css`
      height: 45px;
      margin: 0 -1px -1px 2px;
      padding-left: 0;
      background: #fff;
      border: 1px solid #a4a4a4;
      border-right: 0;
    `}
`;

const SettingsButton = styled.button`
  display: flex;
  flex: none;
  justify-content: center;
  height: 40px;
  padding-top: 5px;
`;

const Navigator = styled.section`
  display: flex;
  flex: none;
  flex-direction: column;
  width: 384px;
  padding: 0 10px 6px 6px;
  background: #fff;
  border-right: 1px solid #8c9696;
  font-size: 15px;
`;

const NavHeader = styled.div`
  display: flex;
  align-items: center;
  justify-content: space-between;
  height: 31px;
  padding: 2px 6px 0 4px;
`;

const NavTitle = styled.h2`
  margin: 0;
  font-size: 15px;
  font-weight: 400;
`;

const MaxButton = styled.button`
  width: 14px;
  height: 13px;
  border: 1px solid #111;
  border-top-width: 2px;
`;

const TreeFrame = styled.div`
  display: flex;
  flex: 1;
  flex-direction: column;
  min-height: 0;
  padding: 1px 0 2px 1px;
  border: 1px solid ${LINE};
  border-bottom: 0;
`;

const TreeViewport = styled.div`
  flex: 1 1 0;
  min-height: 0;
  overflow: hidden;
`;

const Table = styled.table`
  width: 100%;
  table-layout: fixed;
  border-collapse: separate;
  border-spacing: 0;
`;

const Th = styled.th`
  height: 24px;
  padding: 0 0 0 6px;
  font-weight: 400;
  text-align: left;
  background: #efefef;
  border-right: 1px solid #d4d4d4;
  border-bottom: 1px solid #d4d4d4;
  &:last-child {
    border-right: 0;
  }
`;

const Clip = styled.div`
  height: 22px;
  line-height: 22px;
  overflow: hidden;
  white-space: nowrap;
`;

const Row = styled.tr<{ $accent?: boolean }>`
  color: ${(p) => (p.$accent ? BLUE : "#1a1a1a")};
  &:nth-child(even) {
    background: #fafafa;
  }
`;

const Td = styled.td<{ $pad?: number }>`
  height: 24px;
  padding: 0 0 0 ${(p) => p.$pad ?? 0}px;
  border-right: 1px solid #e6e6e6;
  border-bottom: 1px solid #e6e6e6;
  &:last-child {
    border-right: 0;
  }
`;

const NameCell = styled.div`
  display: flex;
  align-items: center;
  height: 23px;
  line-height: 22px;
  white-space: nowrap;
`;

const Slot = styled.span`
  display: grid;
  flex: none;
  place-items: center;
  width: 19px;
  height: 23px;
  & > * {
    grid-area: 1 / 1;
  }
`;

const Guide = styled.svg`
  display: block;
  width: 19px;
  height: 23px;
  overflow: visible;
`;

const Expander = styled.button`
  width: 11px;
  height: 11px;
  background: #fff;
  border: 1px solid #cfcfcf;
  z-index: 1;
  & > svg {
    display: block;
    width: 9px;
    height: 9px;
  }
`;

const Tickbox = styled.span`
  display: grid;
  flex: none;
  width: 13px;
  height: 13px;
  margin: 0 2px 0 1px;
  & > * {
    grid-area: 1 / 1;
  }
  & > svg {
    width: 13px;
    height: 13px;
    pointer-events: none;
  }
`;

const Checkbox = styled.input<{ $dashed?: boolean }>`
  appearance: none;
  width: 13px;
  height: 13px;
  background: #fff;
  border: 1px ${(p) => (p.$dashed ? "dashed" : "solid")} #000;
`;

const NameText = styled.span`
  margin-left: 3px;
`;

const ScrollBar = styled.div`
  display: flex;
  flex: none;
  height: 20px;
  background: #ededed;
`;

const ScrollArrow = styled.button<{ $dir: "left" | "right" }>`
  display: flex;
  align-items: center;
  justify-content: center;
  width: 22px;
  margin-left: ${(p) => (p.$dir === "right" ? "auto" : 0)};
  &::before {
    content: "";
    border: 4px solid transparent;
    border-${(p) => p.$dir}-width: 0;
    border-${(p) => (p.$dir === "left" ? "right" : "left")}: 5px solid #444;
  }
`;

const ScrollThumb = styled.div`
  display: flex;
  align-items: center;
  justify-content: center;
  gap: 2px;
  width: 137px;
  border: 1px solid #979797;
  border-radius: 1px;
  background: linear-gradient(#f2f2f2, #e2e2e2 50%, #cfcfcf 50%, #dcdcdc);
`;

const ThumbLine = styled.i`
  width: 2px;
  height: 9px;
  border-left: 1px solid #666;
`;

const Splitter = styled.div`
  flex: none;
  height: 5px;
  background: #dcdcdc;
  border: 1px solid #b4b4b4;
`;

const SectionButton = styled.button`
  display: flex;
  flex: none;
  align-items: center;
  justify-content: space-between;
  height: 28px;
  padding: 1px 6px 0 7px;
  font-size: 18px;
  color: #2a87b8;
  border-bottom: 2px solid #cfcfcf;
`;

const Chevron = () => (
  <Svg $s={14} viewBox="0 0 14 14" aria-hidden="true">
    <path d="M0 0h3l4 8 4-8h3L8 12H6z" fill="#2a87b8" />
  </Svg>
);

const Viewport = styled.section`
  display: flex;
  flex: 1;
  min-width: 0;
  background: linear-gradient(#b4b5b6, #c4c5c7 22%, #d5d6d7 48%, #e3e4e5 78%, #e7e8ea);
`;

const Scene = styled.svg`
  display: block;
  flex: 1;
  min-width: 0;
  width: 100%;
  height: 100%;
`;

const BottomBar = styled.footer`
  display: flex;
  flex: none;
  height: 79px;
  border-bottom: 1px solid #a8a8a8;
`;

/* ---------- navigator data ---------- */

type Guides = "none" | "line" | "tee" | "end" | "plus" | "minus";

interface Node {
  text: string;
  icon: string;
  slots: { kind: Guides; up?: boolean; down?: boolean }[];
  check?: "red" | "gray" | "dashed";
  status?: string;
  filter?: string;
  accent?: boolean;
}

const OFF = "(过滤器 : 关";
const ON = "(过滤器 : 开";
const tee = { kind: "tee" as Guides };
const blank = { kind: "none" as Guides };

const NODES: Node[] = [
  { text: "5.0MW 导流罩块...", icon: "rootPart", slots: [], status: "显示部件和...", accent: true },
  { text: "5.0MW 导流...", icon: "meshBall", slots: [{ kind: "plus", down: true }], check: "red" },
  { text: "CSYS", icon: "folder", slots: [tee], filter: OFF },
  { text: "组", icon: "folder", slots: [tee], filter: OFF },
  { text: "场", icon: "fx", slots: [tee], check: "dashed" },
  { text: "建模对象（已过...", icon: "meshList", slots: [tee], filter: ON },
  { text: "区域", icon: "folder", slots: [tee], filter: OFF },
  { text: "仿真对象容器", icon: "boxTarget", slots: [tee], filter: OFF },
  { text: "约束容器", icon: "fixed", slots: [{ kind: "plus", up: true, down: true }], check: "red", filter: OFF },
  { text: "载荷容器", icon: "loadArrow", slots: [{ kind: "plus", up: true, down: true }], check: "red", filter: OFF },
  { text: "求解器集", icon: "folder", slots: [tee], filter: OFF },
  { text: "Solution 1", icon: "solution", slots: [{ kind: "minus", up: true }], status: "活动", accent: true },
  { text: "温度", icon: "loadArrow", slots: [blank, tee], check: "gray", filter: OFF },
  { text: "仿真对象", icon: "boxTarget", slots: [blank, tee], check: "gray", filter: OFF },
  { text: "约束", icon: "fixed", slots: [blank, { kind: "plus", up: true, down: true }], check: "red", filter: OFF },
  { text: "Subcase - S...", icon: "subcase", slots: [blank, { kind: "minus", up: true, down: true }], status: "活动", accent: true },
  { text: "载荷", icon: "loadArrow", slots: [blank, { kind: "line" }, { kind: "plus", up: true }], check: "red", filter: OFF },
  { text: "结果", icon: "folder", slots: [blank, { kind: "minus", up: true }] },
  { text: "Structural", icon: "structural", slots: [blank, blank, { kind: "end" }], status: "自动判断" },
];

const SPARE_ROWS = [0, 1, 2, 3];

const TreeSlot = ({ kind, up, down, name }: { kind: Guides; up?: boolean; down?: boolean; name: string }) => {
  const box = kind === "plus" || kind === "minus";
  const top = kind === "line" || kind === "tee" || kind === "end" || up;
  const bottom = kind === "line" || kind === "tee" || down;
  const arm = kind === "tee" || kind === "end" || box;
  return (
    <Slot>
      <Guide viewBox="0 0 19 23" aria-hidden="true">
        <g stroke="#999" strokeDasharray="1 1">
          {top && <path d="M9.500 0v12" />}
          {bottom && <path d="M9.500 12v12" />}
          {arm && <path d="M10 11.500h8" />}
        </g>
      </Guide>
      {box && (
        <Expander type="button" aria-label={kind === "plus" ? `展开 ${name}` : `折叠 ${name}`}>
          <svg viewBox="0 0 9 9" aria-hidden="true">
            <path d={kind === "plus" ? "M1 4.500h7M4.500 1v7" : "M1 4.500h7"} stroke="#111" />
          </svg>
        </Expander>
      )}
    </Slot>
  );
};

const TreeRow = ({ node }: { node: Node }) => {
  const [on, setOn] = useState(node.check === "red" || node.check === "gray");
  return (
    <Row $accent={node.accent}>
      <Td>
        <NameCell>
          {node.slots.map((s, i) => (
            <TreeSlot key={i} {...s} name={node.text} />
          ))}
          {node.check && (
            <Tickbox>
              <Checkbox
                type="checkbox"
                aria-label={node.text}
                checked={on}
                onChange={() => setOn(!on)}
                $dashed={node.check === "dashed"}
              />
              {on && (
                <svg viewBox="0 0 13 13" aria-hidden="true">
                  <path d="M2.500 6 5 9.500 10.500 3" fill="none" strokeWidth="2.500" stroke={node.check === "red" ? "#e01818" : "#b8b8b8"} />
                </svg>
              )}
            </Tickbox>
          )}
          <Icon name={node.icon} size={16} />
          <NameText>{node.text}</NameText>
        </NameCell>
      </Td>
      <Td />
      <Td $pad={4}>
        <Clip>{node.status}</Clip>
      </Td>
      <Td $pad={4}>
        <Clip>{node.filter}</Clip>
      </Td>
    </Row>
  );
};

/* ---------- model in the graphics window ---------- */

const PLATE =
  "M698 44C560 62 400 150 272 367L190 382C105 405 62 530 62 680C66 860 125 970 190 1032L232 1072C320 1185 450 1255 594 1290C610 1060 640 920 700 680C735 530 790 370 847 210C750 185 670 120 692 60Z" +
  "M268 393C370 430 447 620 448 780C448 930 400 1060 325 1076L310 1073C260 1030 212 960 210 905L212 886L207 880V858L212 838L195 832C182 780 184 720 184 680C188 560 215 460 268 393Z";

const MARKS: [number, number][] = [
  [535, 143], [532, 163], [533, 183], [537, 207], [547, 226], [560, 248], [575, 268], [595, 288], [617, 307],
  [643, 325], [670, 343], [701, 358], [732, 372], [768, 383], [465, 451], [205, 849], [212, 944], [222, 976],
  [241, 1008], [265, 1041], [296, 1072], [330, 1101], [368, 1131], [411, 1156], [460, 1181], [510, 1203], [564, 1222],
];

const Model = () => (
  <Scene viewBox="-1062 -393 3285 1926" preserveAspectRatio="xMidYMid meet" role="img" aria-label="5.0MW 导流罩块">
    <path d={PLATE} fill="#656565" fillRule="evenodd" />
    <g fill="none" stroke="#383838" strokeWidth="3">
      <path d="M272 378C400 395 492 600 495 780C495 950 420 1070 335 1076" strokeWidth="4" />
      <path d="M698 44C560 62 400 150 272 367" />
      <path d="M750 174C785 195 820 204 847 210" strokeWidth="4" />
      <path d="M600 290C660 335 720 360 772 378" strokeDasharray="14 3" strokeWidth="4" />
      <path d="M310 1073C380 1135 460 1180 570 1215" strokeWidth="4" />
      <path d="M210 930C215 1060 390 1205 565 1255" />
      <path d="M232 1072C320 1185 450 1255 594 1290" />
      <path d="M847 210C790 370 735 530 700 680C640 920 610 1060 594 1290" strokeDasharray="10 4" />
    </g>
    <g fill="none" stroke="#464646" strokeWidth="2" strokeDasharray="6 6">
      <path d="M330 355C450 380 585 600 588 800C588 930 520 1030 420 1065" />
      <path d="M460 410C560 500 606 680 606 800C604 880 590 920 575 945" />
      <path d="M272 380C215 450 178 560 180 690C180 740 182 790 190 830" />
      <path d="M683 120C715 185 780 215 838 225" />
      <path d="M537 130C530 200 560 260 600 290" />
      <path d="M560 280C600 340 680 372 765 395" />
      <path d="M700 55C570 72 430 160 320 300" />
      <path d="M192 890C180 1080 380 1225 565 1262" />
      <path d="M280 1080C360 1160 450 1210 560 1228" />
      <path d="M185 1032H210" />
    </g>
    <g fill="#2f62a8">
      {MARKS.map(([x, y]) => (
        <path key={`${x}-${y}`} d={`M${x - 15} ${y - 2}h8l4-6h7l1 5 5 2-4 4 1 8-9-4-4-5-9-2z`} />
      ))}
    </g>
    <path d="M820 524 824 560 802 645H797L806 560Z" fill="#38a838" />
    <path d="M790 668 738 720 714 732 726 711Z" fill="#8c2020" />
    <path d="M812 670 898 706 938 726 893 720Z" fill="#1540d8" />
    <g fill="none" stroke="#d02828" strokeWidth="3">
      <circle cx="808" cy="660" r="22" />
      <path d="M790 646h36M790 674h36M796 642l22 38M820 642l-22 38M824 658l46-5" />
    </g>
    <path d="M868 647 882 652 870 659Z" fill="#d02828" />
    <g fontSize="40" fontFamily={FONT}>
      <text x="768" y="518" fill="#2f9a38">YC</text>
      <text x="718" y="769" fill="#c82828">XC</text>
      <text x="896" y="769" fill="#1a48e0">ZC</text>
    </g>
  </Scene>
);

/* ---------- page ---------- */

const MENUS: [string, string, boolean?][] = [
  ["文件", "F"], ["编辑", "E"], ["视图", "V"], ["插入", "S"], ["格式", "R"], ["工具", "T"],
  ["装配", "A"], ["信息", "I"], ["分析", "L"], ["首选项", "P", true], ["窗口", "O"], ["帮助", "H"],
];

const TABS: { icon: string; label: string; tall?: boolean; gap?: boolean }[] = [
  { icon: "navResult", label: "后处理导航器", tall: true },
  { icon: "navAssembly", label: "装配导航器", tall: true },
  { icon: "navConstraint", label: "约束导航器", tall: true },
  { icon: "navPart", label: "部件导航器", tall: true },
  { icon: "navGraph", label: "XY 函数导航器", tall: true },
  { icon: "books", label: "重用库" },
  { icon: "cast", label: "HD3D 工具", gap: true },
  { icon: "web", label: "Web 浏览器", gap: true },
  { icon: "clock", label: "历史记录", gap: true },
  { icon: "wand", label: "系统可视化场景" },
  { icon: "tools", label: "加工向导" },
  { icon: "roles", label: "角色" },
];

export default function App() {
  return (
    <Window>
      <GlobalStyle />
      <Gradients />
      <TitleBar>
        <Logo>NX</Logo>
        <Title>NX 10 - Advanced Simulation - [(仿真) 5.0MW 导流罩块Ⅰ_fem1_sim1.sim （修改的）]</Title>
      </TitleBar>

      <MenuBar>
        <Grip />
        <MenuIcon>
          <Icon name="app" size={21} />
        </MenuIcon>
        {MENUS.map(([text, key, gap]) => (
          <MenuButton key={key} type="button" $gap={gap}>
            {text}(<u>{key}</u>)
          </MenuButton>
        ))}
      </MenuBar>

      <Bar $h={36}>
        <Group>
          <Grip />
          <LaunchButton type="button" $w={71}>
            <Icon name="start" />
            <span>启动</span>
            <Triangle />
          </LaunchButton>
          <Tool icon="newDoc" label="新建" />
          <Tool icon="open" label="打开" />
          <Tool icon="floppy" label="保存" />
          <Tool icon="saveEdit" label="另存为" />
          <Tool icon="print" label="打印" />
          <Sep />
          <Tool icon="cross" label="删除" />
          <Sep />
          <Tool icon="undo" label="撤消" />
          <Drop label="撤消列表" w={14} />
          <Sep />
          <Tool icon="calculator" label="计算" />
          <Drop label="计算选项" w={14} />
          <Sep />
          <Tool icon="switchCmd" label="命令列表" />
          <Sep />
          <Tool icon="info" label="信息" />
          <Sep />
          <SearchBox>
            <SearchInput placeholder="查找命令" aria-label="查找命令" />
            <Icon name="search" size={16} />
          </SearchBox>
          <Drop label="工具条选项" at="low" />
        </Group>
        <Group>
          <Grip />
          <Tool icon="fit" label="适合窗口" />
          <Drop label="适合窗口选项" />
          <Tool icon="orient" label="定向视图" />
          <Drop label="定向视图选项" />
          <Tool icon="cube" label="渲染样式" />
          <Drop label="渲染样式选项" />
          <Tool icon="background" label="背景" />
          <Drop label="背景选项" />
          <Sep />
          <Tool icon="section" label="剪切截面" />
          <Tool icon="sectionEdit" label="编辑截面" />
          <Drop label="视图选项" at="low" />
        </Group>
        <Group>
          <Grip />
          <Tool icon="palette" label="编辑显示" />
          <Sep />
          <Tool icon="playDiamond" label="显示和隐藏" />
          <Drop label="显示和隐藏选项" />
          <Sep />
          <Tool icon="measure" label="测量" />
          <Drop label="测量选项" w={14} />
          <Tool icon="ruler" label="测量距离" />
          <Drop label="实用工具选项" at="low" />
        </Group>
      </Bar>

      <Bar $h={78}>
        <Group>
          <Grip />
          <Big icon="partWindow" text="更改显示部件" drop />
          <Big icon="material" text="管理材料" drop />
          <Sep />
          <Big icon="quality" text="单元质量" w={92} drop />
          <Drop label="工具条选项" at="low" />
        </Group>
        <Group>
          <Grip />
          <Tool icon="layout" label="布局" disabled />
          <Tool icon="layers" label="图层" disabled />
          <Tool icon="layersList" label="图层设置" disabled />
          <Sep />
          <Tool icon="tag" label="标签" disabled />
          <Sep />
          <Tool icon="checkPart" label="检查部件" disabled />
          <Tool icon="checkHammer" label="检查特征" disabled />
          <Tool icon="checkBox" label="检查体" disabled />
          <Sep />
          <Tool icon="abc" label="重命名" disabled />
          <Drop label="工具条选项" at="low" />
        </Group>
      </Bar>

      <Bar $h={78}>
        <Group>
          <Grip />
          <Big icon="partWindow" text="更改显示部件" drop />
          <Sep />
          <Big icon="meshList" text="建模对象" />
          <Big icon="sequence" text="条件序列" />
          <Big icon="scheme" text="载荷方案" />
          <Big icon="region" text="仿真区域" />
          <Big icon="boxTarget" text="仿真对象类型" w={87} lead={11} drop />
          <Big icon="loadArrow" text="载荷类型" w={86} lead={10} drop />
          <Big icon="fixed" text="约束类型" w={86} lead={10} drop />
          <Sep />
          <Big icon="solveHand" text="解算方案" />
          <Big icon="modelSet" text="模型设置" drop />
          <Sep />
          <Big icon="calculator" text="求解" w={92} drop />
          <Big icon="report" text="创建报告" drop />
          <Drop label="工具条选项" at="low" w={10} />
        </Group>
        <Group>
          <Grip />
          <Tool icon="locked" label="锁定" disabled />
          <Tool icon="locked" label="解锁" disabled />
          <Drop label="工具条选项" at="low" />
        </Group>
      </Bar>

      <SelectionBar>
        <SelectBox $w={167}>
          <Select aria-label="选择过滤器" defaultValue="none">
            <option value="none">没有选择过滤器</option>
          </Select>
          <SelectArrow />
        </SelectBox>
        <SelectBox $w={176}>
          <Select aria-label="选择范围" defaultValue="all">
            <option value="all">整个装配</option>
          </Select>
          <SelectArrow />
        </SelectBox>
        <Tool icon="linkGray" label="部件间链接" w={19} size={17} disabled />
        <Sep />
        <Tool icon="filterBack" label="重置过滤器" w={24} size={16} disabled />
        <ToolButton type="button" aria-label="常规选择过滤器" $w={20}>
          <Framed>
            <Icon name="filterSnap" size={12} />
          </Framed>
        </ToolButton>
        <Drop label="过滤器选项" />
        <Tool icon="rotateGray" label="恢复选择" w={23} size={16} disabled />
        <Tool icon="treeGray" label="向上一级" w={23} size={17} disabled />
        <Sep />
        <Tool icon="marquee" label="矩形选择" w={23} size={18} />
        <Drop label="选择方式" />
        <Sep />
        <Tool icon="shellPick" label="高亮显示面" w={24} size={17} />
        <Tool icon="cubePick" label="高亮显示体" w={23} size={17} />
      </SelectionBar>

      <Main>
        <ResourceBar>
          <SettingsButton type="button" aria-label="资源条选项">
            <Icon name="gear" size={16} />
          </SettingsButton>
          <ResourceTab type="button" aria-label="仿真导航器" $active>
            <Icon name="navMesh" size={26} tall />
          </ResourceTab>
          {TABS.map((t) => (
            <ResourceTab key={t.icon} type="button" aria-label={t.label} $gap={t.gap}>
              <Icon name={t.icon} size={t.tall ? 26 : 23} tall={t.tall} />
            </ResourceTab>
          ))}
        </ResourceBar>

        <Navigator>
          <NavHeader>
            <NavTitle>仿真导航器</NavTitle>
            <MaxButton type="button" aria-label="最大化" />
          </NavHeader>
          <TreeFrame>
            <TreeViewport>
              <Table>
                <colgroup>
                  <col width="160" />
                  <col width="24" />
                  <col width="100" />
                  <col />
                </colgroup>
                <thead>
                  <tr>
                    <Th><Clip>名称</Clip></Th>
                    <Th><Clip>颜</Clip></Th>
                    <Th><Clip>状态</Clip></Th>
                    <Th><Clip>过滤器</Clip></Th>
                  </tr>
                </thead>
                <tbody>
                  {NODES.map((n, i) => (
                    <TreeRow key={i} node={n} />
                  ))}
                  {SPARE_ROWS.map((i) => (
                    <Row key={i}>
                      <Td />
                      <Td />
                      <Td />
                      <Td />
                    </Row>
                  ))}
                </tbody>
              </Table>
            </TreeViewport>
            <ScrollBar>
              <ScrollArrow type="button" aria-label="向左滚动" $dir="left" />
              <ScrollThumb>
                <ThumbLine />
                <ThumbLine />
                <ThumbLine />
              </ScrollThumb>
              <ScrollArrow type="button" aria-label="向右滚动" $dir="right" />
            </ScrollBar>
          </TreeFrame>
          <Splitter />
          <SectionButton type="button">
            仿真文件视图
            <Chevron />
          </SectionButton>
          <SectionButton type="button">
            预览
            <Chevron />
          </SectionButton>
        </Navigator>

        <Viewport>
          <Model />
        </Viewport>
      </Main>

      <BottomBar>
        <Group $open>
          <Grip />
          <Big icon="partWindow" text="更改显示部件" drop />
          <Big icon="wrench" text="编辑后处理视图" wrap disabled />
          <Big icon="blocks" text="设置结果" disabled />
          <Big icon="question" text="标识结果" disabled />
          <Big icon="chart" text="创建图表" disabled />
          <Big icon="noteA" text="新建注释" disabled />
          <Big icon="noteDrag" text="拖动注释" disabled />
          <Big icon="envelope" text="结果包络" disabled drop />
          <Big icon="cone" text="忽略背面" drop />
          <Sep />
          <Big icon="arrowL" text="上一模态/迭代" wrap disabled />
          <Big icon="arrowR" text="下一模态/迭代" wrap disabled />
          <Sep />
          <Big icon="animate" text="动画" disabled />
          <Big icon="stepB" text="上一步" disabled />
          <Big icon="stepF" text="下一步" disabled />
          <Big icon="play" text="播放" disabled />
          <Big icon="pause" text="暂停" disabled />
        </Group>
      </BottomBar>
    </Window>
  );
}
